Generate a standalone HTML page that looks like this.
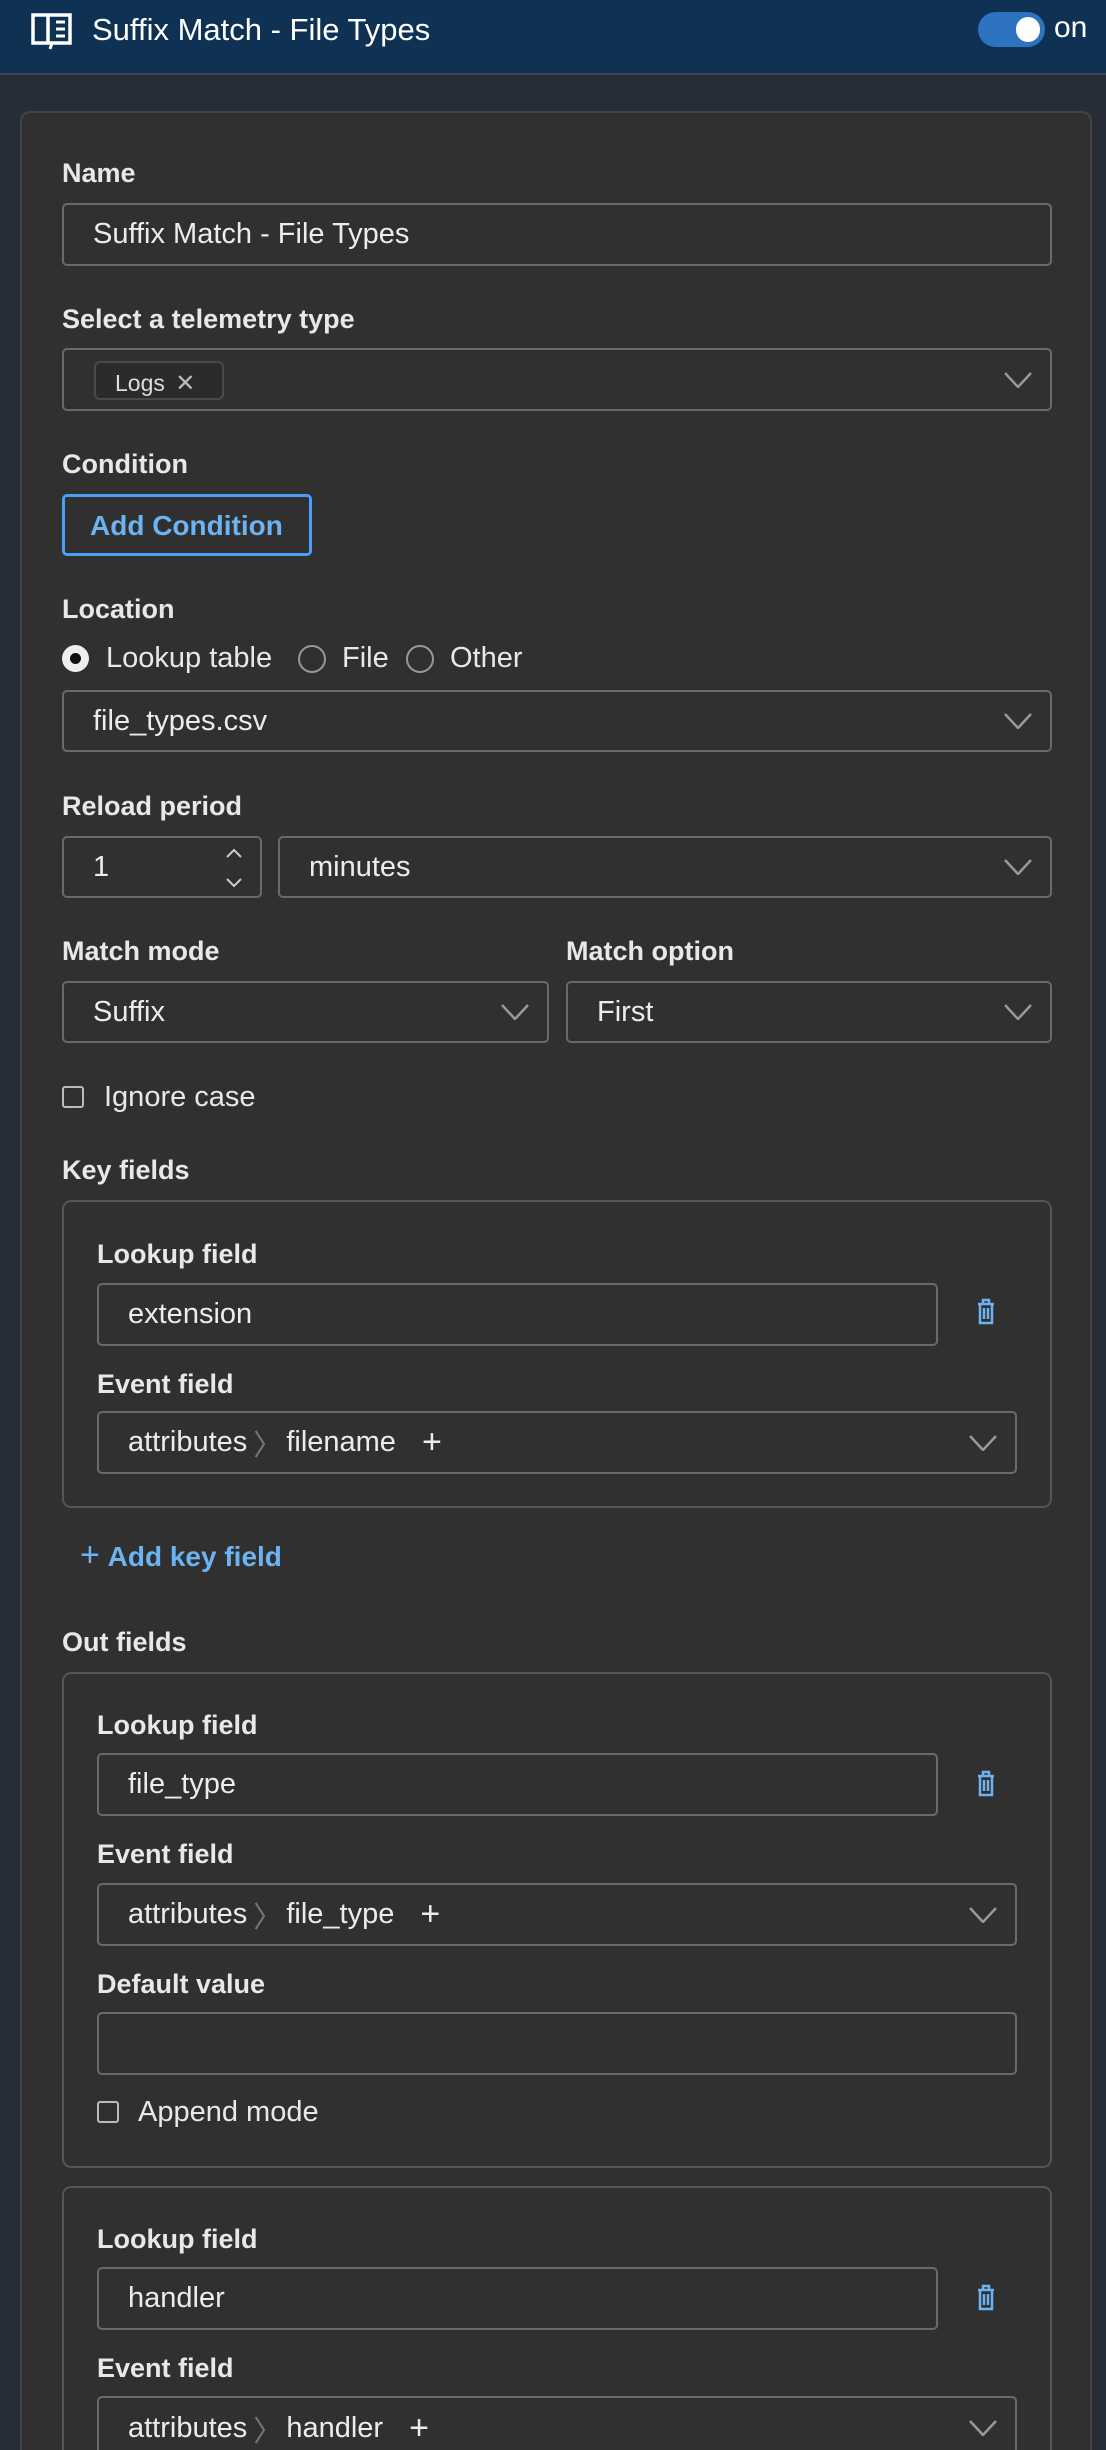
<!DOCTYPE html>
<html><head><meta charset="utf-8"><style>
*{box-sizing:border-box;margin:0;padding:0}
html,body{width:1106px;height:2450px;overflow:hidden}
body{background:#272d36;font-family:"Liberation Sans",sans-serif;color:#e6e6e6;position:relative}
.a{position:absolute}
.hdr{left:0;top:0;width:1106px;height:75px;background:#0e3154;border-bottom:2px solid #3c4550}
.card{left:20px;top:111px;width:1072px;height:2339px;background:#303030;border:2px solid #444;border-bottom:none;border-radius:10px 10px 0 0}
.lbl{position:absolute;font-size:27px;line-height:30px;color:#e8e8e8;font-weight:bold}
.rt{position:absolute;font-size:29px;line-height:30px;color:#e8e8e8}
.in{position:absolute;border:2px solid #6a6a6a;border-radius:5px;background:#303030;font-size:29px;color:#ececec;padding-left:29px;display:flex;align-items:center}
.chev{position:absolute;right:18px;top:50%;margin-top:-8px;width:28px;height:16px}
.box{position:absolute;border:2px solid #555;border-radius:9px}
.blue{color:#6db3f2}
.cb{position:absolute;width:22px;height:22px;border:2px solid #bbb;border-radius:3px}
</style></head><body>
<div class="a hdr"></div>
<svg class="a" style="left:30px;top:12px" width="44" height="40" viewBox="0 0 44 40" fill="none" stroke="#fff" stroke-width="3.5"><path d="M3 3h15v28H3z M18 3h22v28H18"/><path d="M22 31l-2 6M26 10h9M26 17h9M26 24h9" stroke-width="3"/></svg>
<div class="a" style="left:92px;top:12px;font-size:31px;color:#fff">Suffix Match - File Types</div>
<div class="a" style="left:978px;top:12px;width:67px;height:35px;border-radius:18px;background:#2d73bf"></div>
<div class="a" style="left:1016px;top:17px;width:24px;height:25px;border-radius:13px;background:#fff"></div>
<div class="a" style="left:1054px;top:11px;font-size:30px;color:#fff">on</div>

<div class="a card"></div>

<div class="lbl" style="left:62px;top:158px">Name</div>
<div class="in" style="left:62px;top:203px;width:990px;height:63px">Suffix Match - File Types</div>

<div class="lbl" style="left:62px;top:304px">Select a telemetry type</div>
<div class="in" style="left:62px;top:348px;width:990px;height:63px">
<div class="a" style="left:30px;top:11px;width:130px;height:39px;border:2px solid #4a4a4a;border-radius:6px;background:#2b2b2b;font-size:23px;padding:6px 0 0 19px;color:#ddd">Logs <span style="font-size:24px;color:#bbb;margin-left:4px">✕</span></div>
<svg class="chev" viewBox="0 0 28 16"><path d="M1 1l13 14 13-14" fill="none" stroke="#999" stroke-width="2.5"/></svg></div>

<div class="lbl" style="left:62px;top:449px">Condition</div>
<div class="a" style="left:62px;top:494px;width:250px;height:62px;border:3px solid #4a9ef8;border-radius:5px;font-size:28px;font-weight:bold;color:#6db3f2;padding:13px 0 0 25px">Add Condition</div>

<div class="lbl" style="left:62px;top:594px">Location</div>
<div class="a" style="left:62px;top:645px;width:27px;height:27px;border-radius:50%;background:#eee"></div>
<div class="a" style="left:70px;top:653px;width:11px;height:11px;border-radius:50%;background:#111"></div>
<div class="rt" style="left:106px;top:643px">Lookup table</div>
<div class="a" style="left:298px;top:645px;width:28px;height:28px;border-radius:50%;border:2px solid #999"></div>
<div class="rt" style="left:342px;top:643px">File</div>
<div class="a" style="left:406px;top:645px;width:28px;height:28px;border-radius:50%;border:2px solid #999"></div>
<div class="rt" style="left:450px;top:643px">Other</div>
<div class="in" style="left:62px;top:690px;width:990px;height:62px">file_types.csv<svg class="chev" viewBox="0 0 28 16"><path d="M1 1l13 14 13-14" fill="none" stroke="#999" stroke-width="2.5"/></svg></div>

<div class="lbl" style="left:62px;top:791px">Reload period</div>
<div class="in" style="left:62px;top:836px;width:200px;height:62px">1
<svg class="a" style="left:160px;top:9px" width="20" height="42" viewBox="0 0 20 42" fill="none" stroke="#ccc" stroke-width="2"><path d="M3 10l7-7 7 7M3 32l7 7 7-7"/></svg></div>
<div class="in" style="left:278px;top:836px;width:774px;height:62px">minutes<svg class="chev" viewBox="0 0 28 16"><path d="M1 1l13 14 13-14" fill="none" stroke="#999" stroke-width="2.5"/></svg></div>

<div class="lbl" style="left:62px;top:936px">Match mode</div>
<div class="lbl" style="left:566px;top:936px">Match option</div>
<div class="in" style="left:62px;top:981px;width:487px;height:62px">Suffix<svg class="chev" viewBox="0 0 28 16"><path d="M1 1l13 14 13-14" fill="none" stroke="#999" stroke-width="2.5"/></svg></div>
<div class="in" style="left:566px;top:981px;width:486px;height:62px">First<svg class="chev" viewBox="0 0 28 16"><path d="M1 1l13 14 13-14" fill="none" stroke="#999" stroke-width="2.5"/></svg></div>

<div class="cb" style="left:62px;top:1086px"></div>
<div class="rt" style="left:104px;top:1082px">Ignore case</div>

<div class="lbl" style="left:62px;top:1155px">Key fields</div>
<div class="box" style="left:62px;top:1200px;width:990px;height:308px"></div>
<div class="lbl" style="left:97px;top:1239px">Lookup field</div>
<div class="in" style="left:97px;top:1283px;width:841px;height:63px">extension</div>
<svg class="a" style="left:976px;top:1298px" width="20" height="28" viewBox="0 0 20 28" fill="none" stroke="#6db3f2" stroke-width="2.5"><path d="M2 6h16M7 6V2h6v4M4 6v19h12V6M8 10v11M12 10v11"/></svg>
<div class="lbl" style="left:97px;top:1369px">Event field</div>
<div class="in" style="left:97px;top:1411px;width:920px;height:63px">attributes<span style="color:#777;margin:0 4px 0 6px">〉</span>filename <span style="margin-left:26px;font-size:34px">+</span><svg class="chev" viewBox="0 0 28 16"><path d="M1 1l13 14 13-14" fill="none" stroke="#999" stroke-width="2.5"/></svg></div>

<div class="lbl blue" style="left:80px;top:1540px;font-size:28px"><span style="font-size:34px;font-weight:normal">+</span>&nbsp;Add key field</div>

<div class="lbl" style="left:62px;top:1627px">Out fields</div>
<div class="box" style="left:62px;top:1672px;width:990px;height:496px"></div>
<div class="lbl" style="left:97px;top:1710px">Lookup field</div>
<div class="in" style="left:97px;top:1753px;width:841px;height:63px">file_type</div>
<svg class="a" style="left:976px;top:1770px" width="20" height="28" viewBox="0 0 20 28" fill="none" stroke="#6db3f2" stroke-width="2.5"><path d="M2 6h16M7 6V2h6v4M4 6v19h12V6M8 10v11M12 10v11"/></svg>
<div class="lbl" style="left:97px;top:1839px">Event field</div>
<div class="in" style="left:97px;top:1883px;width:920px;height:63px">attributes<span style="color:#777;margin:0 4px 0 6px">〉</span>file_type <span style="margin-left:26px;font-size:34px">+</span><svg class="chev" viewBox="0 0 28 16"><path d="M1 1l13 14 13-14" fill="none" stroke="#999" stroke-width="2.5"/></svg></div>
<div class="lbl" style="left:97px;top:1969px">Default value</div>
<div class="in" style="left:97px;top:2012px;width:920px;height:63px"></div>
<div class="cb" style="left:97px;top:2101px"></div>
<div class="rt" style="left:138px;top:2097px">Append mode</div>

<div class="box" style="left:62px;top:2186px;width:990px;height:264px;border-bottom:none;border-radius:9px 9px 0 0"></div>
<div class="lbl" style="left:97px;top:2224px">Lookup field</div>
<div class="in" style="left:97px;top:2267px;width:841px;height:63px">handler</div>
<svg class="a" style="left:976px;top:2284px" width="20" height="28" viewBox="0 0 20 28" fill="none" stroke="#6db3f2" stroke-width="2.5"><path d="M2 6h16M7 6V2h6v4M4 6v19h12V6M8 10v11M12 10v11"/></svg>
<div class="lbl" style="left:97px;top:2353px">Event field</div>
<div class="in" style="left:97px;top:2396px;width:920px;height:54px;border-bottom:none;border-radius:5px 5px 0 0;padding-top:9px">attributes<span style="color:#777;margin:0 4px 0 6px">〉</span>handler <span style="margin-left:26px;font-size:34px">+</span><svg class="chev" style="margin-top:-4px" viewBox="0 0 28 16"><path d="M1 1l13 14 13-14" fill="none" stroke="#999" stroke-width="2.5"/></svg></div>
</body></html>
